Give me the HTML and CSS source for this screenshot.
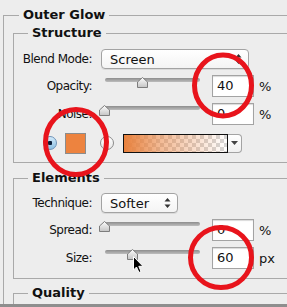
FILE: index.html
```html
<!DOCTYPE html>
<html>
<head>
    <title>Outer Glow</title>
    <meta http-equiv="Content-Type" content="text/html;charset=utf-8"/>
    <link rel="stylesheet" href="styles.css">
</head>
<body>
<div class="panel">
    <fieldset class="box outer">
        <legend>Outer Glow</legend>

        <fieldset class="box group structure">
            <legend>Structure</legend>
            <div class="row">
                <span class="lbl">Blend Mode:</span>
                <div class="select blend"><span>Screen</span>
                    <svg class="arrows" width="7" height="12" viewBox="0 0 7 12"><path d="M3.5 1 L6.5 4.5 L0.5 4.5 Z M3.5 11 L6.5 7.5 L0.5 7.5 Z" fill="#333"/></svg>
                </div>
            </div>
            <div class="row">
                <span class="lbl">Opacity:</span>
                <div class="slider"><div class="track"></div>
                    <svg class="thumb" style="left:32px" width="11" height="11" viewBox="0 0 11 11"><defs><linearGradient id="tg1" x1="0" y1="0" x2="0" y2="1"><stop offset="0" stop-color="#fdfdfd"/><stop offset="1" stop-color="#c4c4c4"/></linearGradient></defs><path d="M5.5 0.5 L10.5 5 L10.5 10.5 L0.5 10.5 L0.5 5 Z" fill="url(#tg1)" stroke="#7d7d7d"/></svg>
                </div>
                <div class="num">40</div><span class="unit">%</span>
            </div>
            <div class="row">
                <span class="lbl">Noise:</span>
                <div class="slider"><div class="track"></div>
                    <svg class="thumb" style="left:-6px" width="11" height="11" viewBox="0 0 11 11"><path d="M5.5 0.5 L10.5 5 L10.5 10.5 L0.5 10.5 L0.5 5 Z" fill="url(#tg1)" stroke="#7d7d7d"/></svg>
                </div>
                <div class="num">0</div><span class="unit">%</span>
            </div>
            <div class="row color-row">
                <span class="radio on"></span>
                <span class="swatch"></span>
                <span class="radio"></span>
                <div class="gradient"></div>
                <div class="grad-btn">
                    <svg width="7" height="4" viewBox="0 0 7 4"><path d="M0 0 L7 0 L3.5 4 Z" fill="#444"/></svg>
                </div>
            </div>
        </fieldset>

        <fieldset class="box group elements">
            <legend>Elements</legend>
            <div class="row">
                <span class="lbl">Technique:</span>
                <div class="select technique"><span>Softer</span>
                    <svg class="arrows" width="7" height="12" viewBox="0 0 7 12"><path d="M3.5 1 L6.5 4.5 L0.5 4.5 Z M3.5 11 L6.5 7.5 L0.5 7.5 Z" fill="#333"/></svg>
                </div>
            </div>
            <div class="row">
                <span class="lbl">Spread:</span>
                <div class="slider"><div class="track"></div>
                    <svg class="thumb" style="left:-6px" width="11" height="11" viewBox="0 0 11 11"><path d="M5.5 0.5 L10.5 5 L10.5 10.5 L0.5 10.5 L0.5 5 Z" fill="url(#tg1)" stroke="#7d7d7d"/></svg>
                </div>
                <div class="num">0</div><span class="unit">%</span>
            </div>
            <div class="row">
                <span class="lbl">Size:</span>
                <div class="slider"><div class="track"></div>
                    <svg class="thumb" style="left:22px" width="11" height="11" viewBox="0 0 11 11"><path d="M5.5 0.5 L10.5 5 L10.5 10.5 L0.5 10.5 L0.5 5 Z" fill="url(#tg1)" stroke="#7d7d7d"/></svg>
                </div>
                <div class="num">60</div><span class="unit">px</span>
            </div>
        </fieldset>

        <fieldset class="box group quality">
            <legend>Quality</legend>
        </fieldset>
    </fieldset>
</div>
<div class="edge"></div>

<svg class="marks" width="287" height="307" viewBox="0 0 287 307">
    <g fill="none" stroke="#e8141c" stroke-width="5">
        <ellipse cx="223" cy="85.5" rx="28.5" ry="30.5"/>
        <ellipse cx="76" cy="142" rx="30.5" ry="32.5"/>
        <ellipse cx="221" cy="257.5" rx="30.5" ry="30"/>
    </g>
    <path d="M133.5 256.5 L133.5 270 L136.5 267 L139 272.5 L141 271.5 L138.8 266.3 L143 266.3 Z" fill="#000" stroke="#fff" stroke-width="1" stroke-linejoin="round"/>
</svg>
</body>
</html>
```

FILE: styles.css
```css
body {
    margin: 0;
    padding: 0;
    width: 287px;
    height: 307px;
    overflow: hidden;
    position: relative;
    background: #ededed;
    font: 12px "DejaVu Sans", "Liberation Sans", sans-serif;
    color: #111;
}

.panel {
    height: 304px;
    overflow: hidden;
}

.box {
    border: 1px solid #a9a9a9;
    border-right: none;
    border-bottom: none;
    padding: 0;
    min-width: 0;
}
.box legend {
    font-weight: bold;
    font-size: 13px;
    line-height: 16px;
    padding: 0 4px;
    color: #111;
}

.outer {
    margin: 7px -20px 0 3px;
}
.outer > legend {
    margin-left: 15px;
}

.group {
    margin: 2px 0 0 9px;
    border-bottom: 1px solid #a9a9a9;
}
.group > legend {
    margin-left: 14px;
}
.structure {
    padding: 8px 0 9px;
}
.elements {
    margin-top: 7px;
    padding: 7px 0 9px;
}
.quality {
    margin-top: 6px;
    border-bottom: none;
    height: 40px;
}

.row {
    display: flex;
    align-items: center;
    margin-top: 6px;
}
.row:first-of-type {
    margin-top: 0;
}

.lbl {
    width: 78px;
    text-align: right;
    white-space: nowrap;
    letter-spacing: -0.5px;
}

.select {
    margin-left: 9px;
    height: 18px;
    border: 1px solid #a3a3a3;
    border-radius: 4px;
    background: linear-gradient(#ffffff, #f4f4f4);
    box-shadow: 0 1px 0 rgba(0,0,0,0.08);
    display: flex;
    align-items: center;
    padding: 0 6px 0 8px;
    font-size: 13px;
}
.select span {
    flex: 1;
}
.select.blend {
    width: 132px;
}
.select.technique {
    width: 61px;
}

.slider {
    position: relative;
    align-self: stretch;
    width: 95px;
    margin-left: 13px;
}
.track {
    margin-top: 3px;
    height: 4px;
    border-radius: 2px;
    background: linear-gradient(#8d8d8d, #bdbdbd);
}
.thumb {
    position: absolute;
    top: 2px;
}

.num {
    margin-left: 12px;
    width: 36px;
    height: 20px;
    line-height: 20px;
    padding-left: 4px;
    background: #fff;
    border: 1px solid #a3a3a3;
    box-shadow: inset 0 1px 1px rgba(0,0,0,0.15);
    font-size: 13px;
}
.unit {
    margin-left: 5px;
    font-size: 13px;
}

.color-row {
    margin-top: 8px;
    height: 20px;
}
.radio {
    width: 14px;
    height: 14px;
    border-radius: 50%;
    border: 1px solid #8a8a8a;
    background: linear-gradient(#ffffff, #e6e6e6);
    box-sizing: border-box;
}
.radio.on {
    margin-left: 29px;
    border-color: #6f93b8;
    background: radial-gradient(circle, #0b1f3a 0 2px, transparent 2.5px),
                linear-gradient(#d3eafa, #8cbfe2);
}
.swatch {
    margin-left: 8px;
    width: 19px;
    height: 19px;
    background: #ed833f;
    border: 1px solid #8c8c8c;
}
.radio:not(.on) {
    margin-left: 14px;
}
.gradient {
    margin-left: 9px;
    width: 103px;
    height: 17px;
    border: 1px solid #111;
    background:
        linear-gradient(to right, #e8813d, rgba(232,129,61,0.55) 35%, rgba(232,129,61,0) 100%),
        conic-gradient(#d6d6d6 25%, #fff 0 50%, #d6d6d6 0 75%, #fff 0) 0 0 / 8px 8px;
}
.grad-btn {
    width: 13px;
    height: 17px;
    border: 1px solid #a3a3a3;
    border-left: none;
    border-radius: 0 4px 4px 0;
    background: linear-gradient(#ffffff, #f0f0f0);
    display: flex;
    align-items: center;
    justify-content: center;
}

.edge {
    height: 3px;
    background: #8e8e8e;
}

.marks {
    position: absolute;
    left: 0;
    top: 0;
    pointer-events: none;
}
```
